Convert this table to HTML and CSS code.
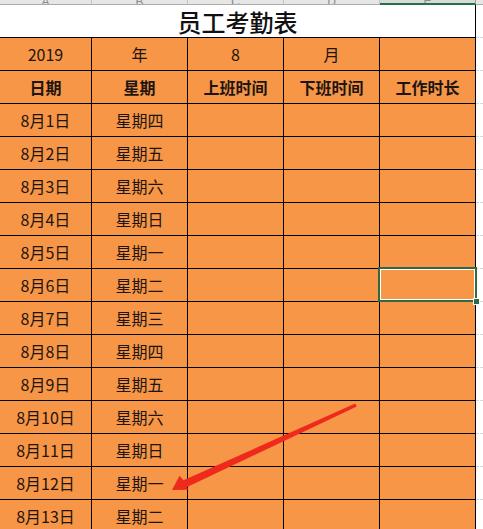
FILE: index.html
```html
<!DOCTYPE html>
<html lang="zh-CN">
<head>
<meta charset="utf-8">
<title>员工考勤表</title>
<link rel="stylesheet" href="styles.css">
</head>
<body>
<div class="sheet">
  <div class="grid">
    <div class="hd"><span>A</span></div>
    <div class="hd"><span>B</span></div>
    <div class="hd"><span>C</span></div>
    <div class="hd"><span>D</span></div>
    <div class="hd hd-sel"><span>E</span></div>
    <div class="hd hd-spill"></div>

    <div class="title">员工考勤表</div>
    <div class="spill"></div>

    <div class="c">2019</div><div class="c">年</div><div class="c">8</div><div class="c">月</div><div class="c"></div><div class="spill"></div>

    <div class="c b">日期</div><div class="c b">星期</div><div class="c b">上班时间</div><div class="c b">下班时间</div><div class="c b">工作时长</div><div class="spill"></div>

    <div class="c">8月1日</div><div class="c">星期四</div><div class="c"></div><div class="c"></div><div class="c"></div><div class="spill"></div>
    <div class="c">8月2日</div><div class="c">星期五</div><div class="c"></div><div class="c"></div><div class="c"></div><div class="spill"></div>
    <div class="c">8月3日</div><div class="c">星期六</div><div class="c"></div><div class="c"></div><div class="c"></div><div class="spill"></div>
    <div class="c">8月4日</div><div class="c">星期日</div><div class="c"></div><div class="c"></div><div class="c"></div><div class="spill"></div>
    <div class="c">8月5日</div><div class="c">星期一</div><div class="c"></div><div class="c"></div><div class="c"></div><div class="spill"></div>
    <div class="c">8月6日</div><div class="c">星期二</div><div class="c"></div><div class="c"></div><div class="c"></div><div class="spill"></div>
    <div class="c">8月7日</div><div class="c">星期三</div><div class="c"></div><div class="c"></div><div class="c"></div><div class="spill"></div>
    <div class="c">8月8日</div><div class="c">星期四</div><div class="c"></div><div class="c"></div><div class="c"></div><div class="spill"></div>
    <div class="c">8月9日</div><div class="c">星期五</div><div class="c"></div><div class="c"></div><div class="c"></div><div class="spill"></div>
    <div class="c">8月10日</div><div class="c">星期六</div><div class="c"></div><div class="c"></div><div class="c"></div><div class="spill"></div>
    <div class="c">8月11日</div><div class="c">星期日</div><div class="c"></div><div class="c"></div><div class="c"></div><div class="spill"></div>
    <div class="c">8月12日</div><div class="c">星期一</div><div class="c"></div><div class="c"></div><div class="c"></div><div class="spill"></div>
    <div class="c">8月13日</div><div class="c">星期二</div><div class="c"></div><div class="c"></div><div class="c"></div><div class="spill"></div>
  </div>

  <div class="selection"><div class="handle"></div></div>

  <svg class="arrow" width="483" height="529" viewBox="0 0 483 529">
    <polygon points="355.2,403.6 183.5,480.3 179.5,475.8 172,490 188.6,489.8 186.6,487.2 356.8,406.4" fill="#ef2a1c"/>
  </svg>
</div>
</body>
</html>
```

FILE: styles.css
```css
* { box-sizing: border-box; }

html, body {
  margin: 0;
  padding: 0;
  background: #ffffff;
  overflow: hidden;
}

.sheet {
  position: relative;
  width: 483px;
  height: 529px;
  overflow: hidden;
  font-family: "Noto Sans CJK SC", "Noto Sans", sans-serif;
  color: #1c1510;
}

.grid {
  display: grid;
  grid-template-columns: 92px 96px 96px 96px 96px 1fr;
  grid-auto-rows: 33px;
  grid-template-rows: 5px 33px;
}

.hd {
  height: 5px;
  background: #e6e6e6;
  border-right: 1px solid #c4c4c4;
  border-bottom: 1px solid #ababab;
  overflow: hidden;
  display: flex;
  justify-content: center;
  align-items: flex-end;
  font-family: "Liberation Sans", sans-serif;
  font-size: 12px;
  line-height: 8px;
  color: #8a8a8a;
}
.hd span { display: block; margin-bottom: -2px; }
.hd-sel {
  background: #d9d9d9;
  border-bottom: 2px solid #217346;
  border-right: 1px solid #9a9a9a;
}
.hd-spill { border-right: none; }

.title {
  grid-column: 1 / 6;
  background: #ffffff;
  border-right: 1px solid #000;
  border-bottom: 1px solid #000;
  display: flex;
  align-items: center;
  justify-content: center;
  font-size: 24px;
  font-weight: 500;
  line-height: 1;
  color: #111;
  padding-top: 1px;
}

.c {
  background: #f79646;
  border-right: 1px solid #000;
  border-bottom: 1px solid #000;
  display: flex;
  align-items: center;
  justify-content: center;
  font-size: 16px;
  white-space: nowrap;
}
.b { font-weight: 700; }

.spill {
  border-bottom: 1px dashed #cdd3dc;
}

.selection {
  position: absolute;
  left: 378px;
  top: 267px;
  width: 99px;
  height: 35px;
  border: 2px solid #2e6b45;
  box-shadow: inset 0 0 0 1px #ffffff;
}
.handle {
  position: absolute;
  right: -5px;
  bottom: -5px;
  width: 7px;
  height: 7px;
  background: #2e6b45;
  border: 1px solid #ffffff;
}

.arrow {
  position: absolute;
  left: 0;
  top: 0;
  pointer-events: none;
}
```
